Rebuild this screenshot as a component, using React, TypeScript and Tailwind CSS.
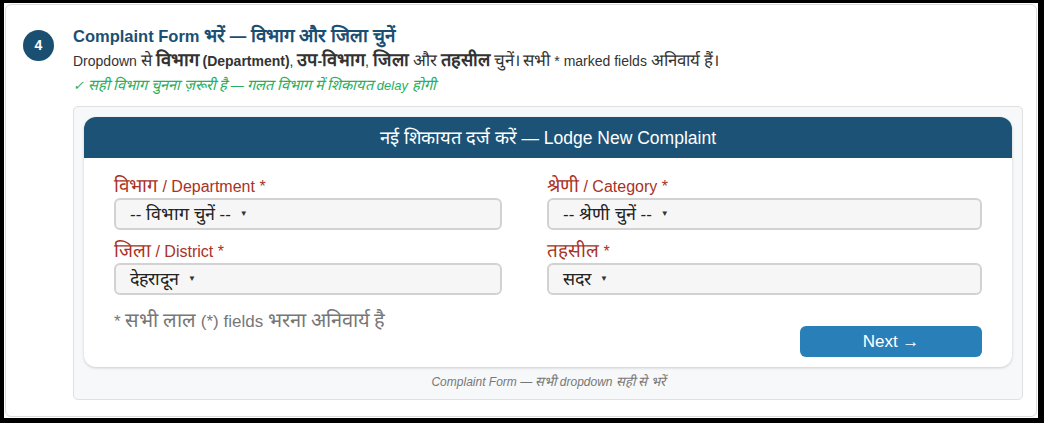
import React from "react";

// Devanagari runs get their own size, the fallback font is narrower than the one in the design
const Dv = ({ s, k }: { s: string; k: string }) => (
  <>
    {s.split(/([\u0900-\u097F]+)/).map((p, i) =>
      /[\u0900-\u097F]/.test(p) ? (
        <span key={i} className={k}>
          {p}
        </span>
      ) : (
        <React.Fragment key={i}>{p}</React.Fragment>
      )
    )}
  </>
);

const fields = [
  { label: "विभाग / Department *", value: "-- विभाग चुनें --" },
  { label: "श्रेणी / Category *", value: "-- श्रेणी चुनें --" },
  { label: "जिला / District *", value: "देहरादून" },
  { label: "तहसील *", value: "सदर" },
];

const SelectBox = ({ label, value }: { label: string; value: string }) => (
  <div className="flex flex-col">
    <label className="block h-[19px] text-[16px] leading-[19px] text-[#a93226]">
      <Dv s={label} k="text-[1.18em] leading-[19px]" />
    </label>
    <div className="mt-[3px] h-[32px] flex items-center rounded-[6px] border-2 border-[#d2d2d2] bg-[#f6f6f6] pl-[14px] text-[17px] text-[#222]">
      <span>
        <Dv s={value} k="text-[1.05em]" />
      </span>
      <span className="ml-[9px] text-[8px] text-[#333]">▼</span>
    </div>
  </div>
);

export default function App() {
  return (
    <div className="w-[1044px] h-[423px] bg-black pt-[3px] pl-[4px] pr-[6px] pb-[5px] font-['Liberation_Sans',Arial,sans-serif]">
      <div className="h-full bg-white p-[1px]">
        <div className="h-full rounded-[6px] border border-[#dcdcdc] bg-white flex gap-[19px] pl-[17px] pt-[19px]">
          <div className="w-[31px] h-[31px] shrink-0 rounded-full bg-[#1b4f72] text-white flex items-center justify-center text-[14px] font-bold mt-[6px]">
            4
          </div>
          <div className="flex-1 pr-[13px]">
            <h2 className="h-[22px] text-[16.5px] leading-[22px] font-bold text-[#1b4f72] mt-[1px]">
              <Dv s="Complaint Form भरें — विभाग और जिला चुनें" k="text-[1.14em] leading-[22px]" />
            </h2>
            <p className="h-[22px] text-[14px] leading-[22px] text-[#333] mt-[2px]">
              <Dv s="Dropdown से " k="text-[1.2em] leading-[22px]" />
              <b>
                <Dv s="विभाग (Department)" k="text-[1.3em] leading-[22px]" />
              </b>
              ,{" "}
              <b>
                <Dv s="उप-विभाग" k="text-[1.3em] leading-[22px]" />
              </b>
              ,{" "}
              <b>
                <Dv s="जिला" k="text-[1.3em] leading-[22px]" />
              </b>{" "}
              <Dv s="और" k="text-[1.2em] leading-[22px]" />{" "}
              <b>
                <Dv s="तहसील" k="text-[1.3em] leading-[22px]" />
              </b>{" "}
              <Dv s="चुनें। सभी * marked fields अनिवार्य हैं।" k="text-[1.2em] leading-[22px]" />
            </p>
            <p className="h-[18px] text-[13px] leading-[18px] italic text-[#27ae60] mt-[5px]">
              <Dv s="✓ सही विभाग चुनना ज़रूरी है — गलत विभाग में शिकायत delay होगी" k="text-[1.13em] leading-[18px]" />
            </p>
            <div className="mt-[12px] rounded-[5px] border border-[#e0e0e0] bg-[#f7f8f9] px-[10px] pt-[10px] pb-[9px]">
              <div className="rounded-[12px] bg-white shadow-[0_1px_3px_rgba(0,0,0,0.18)] overflow-hidden">
                <div className="h-[41px] bg-[#1b5276] text-white text-[17.5px] flex items-center justify-center">
                  <span>
                    <Dv s="नई शिकायत दर्ज करें — Lodge New Complaint" k="text-[1.05em]" />
                  </span>
                </div>
                <div className="px-[30px] pt-[18px] pb-[10px]">
                  <div className="grid grid-cols-[388px_1fr] gap-x-[45px] gap-y-[11px]">
                    {fields.map((f) => (
                      <SelectBox key={f.label} label={f.label} value={f.value} />
                    ))}
                  </div>
                  <div className="h-[48px] flex justify-between items-start mt-[14px]">
                    <p className="h-[22px] text-[17px] text-[#777] leading-[22px]">
                      <Dv s="* सभी लाल (*) fields भरना अनिवार्य है" k="text-[1.18em] leading-[22px]" />
                    </p>
                    <button className="mt-[17px] w-[182px] h-[31px] rounded-[6px] bg-[#2980b9] text-white text-[17px]">
                      Next →
                    </button>
                  </div>
                </div>
              </div>
              <p className="h-[16px] text-center text-[12px] leading-[16px] italic text-[#777] mt-[7px]">
                <Dv s="Complaint Form — सभी dropdown सही से भरें" k="text-[1.1em] leading-[16px]" />
              </p>
            </div>
          </div>
        </div>
      </div>
    </div>
  );
}
